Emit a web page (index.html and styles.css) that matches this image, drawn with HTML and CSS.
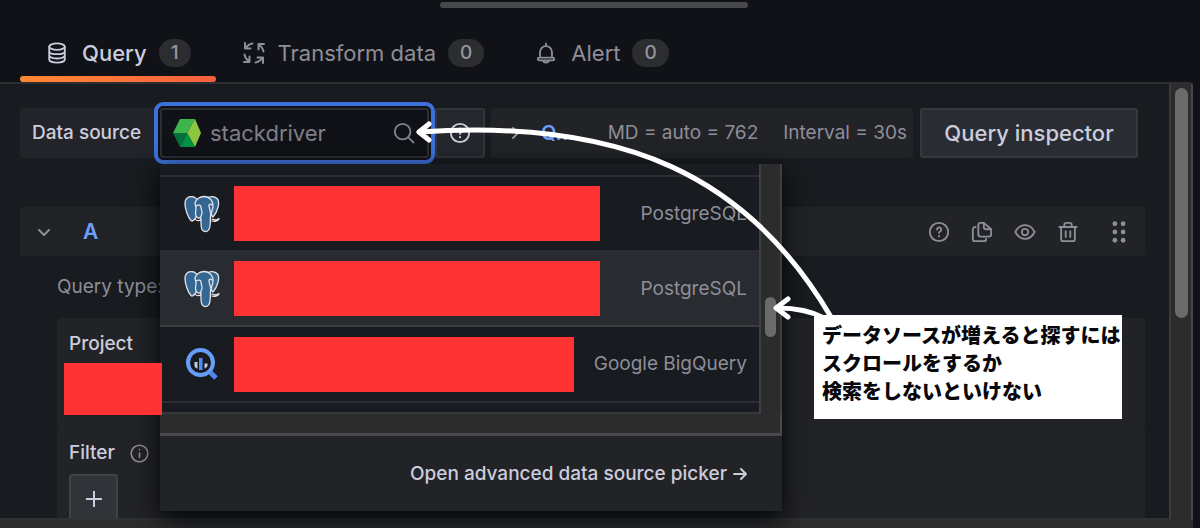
FILE: index.html
```html
<!DOCTYPE html>
<html lang="ja">
<head>
<meta charset="utf-8">
<title>Query editor</title>
<meta name="viewport" content="width=device-width, initial-scale=1">
<link rel="stylesheet" href="styles.css">
</head>
<body>
<svg class="defs" aria-hidden="true">
  <symbol id="elephant" viewBox="0 0 36 38">
    <g stroke="#e4e2ea" stroke-width="1.3" stroke-linejoin="round" stroke-linecap="round" fill="#336791">
      <path d="M10 2C4 .8.8 3.500 1 9c.1 5 3 13.500 6 16.500 1.500 1.500 3-.5 5-3L14 5z"/>
      <path d="M23 3c3-2 8-2 10.500 1 2.500 3.500.5 12-4.500 18l-4-4z"/>
      <path d="M11 8c1-4 5-6.500 9-6.500 6 0 9.500 5 9 10-.3 3-2 6.500-2.500 9.500-.3 3 .2 6-.5 10-.5 3.500-2 5.500-4.500 5.500s-4-2-4.300-5l-.5-9c-3 1.500-4.700-.5-5.200-3.500-.3-2 .7-4 .5-6z"/>
      <path d="M12 11c2-1.500 5-1.200 5 1 0 2.500 2 5 .5 8-.4 1-.8 1.500-.9 2.500" fill="none"/>
      <path d="M28 10c-1-1.300-3.500-1-3 1 .5 3 1 6 2.500 9" fill="none"/>
      <path d="M28 24c2 1.200 5 .8 7-.5-.5 2-4 3.500-7 2.500M11.500 24.500c1 1.500 4 1.500 5.500 0" fill="none"/>
    </g>
  </symbol>
  <symbol id="help" viewBox="0 0 24 24">
    <g fill="none" stroke="currentColor" stroke-width="2" stroke-linecap="round"><circle cx="12" cy="12" r="10"/><path d="M9.800 9.300a2.300 2.300 0 1 1 3.400 2.100c-.8.4-1.200.9-1.200 1.600"/></g><circle cx="12" cy="16.500" r="1.200" fill="currentColor"/>
  </symbol>
  <symbol id="turn" viewBox="0 0 24 24">
    <path d="M3 2v5.500h5.500M3.500 7.500C5 5 7 3.200 10.500 2.500" fill="none" stroke="currentColor" stroke-width="2" stroke-linecap="round" stroke-linejoin="round"/>
  </symbol>
</svg>

<div class="editor">
  <div class="handle"></div>
  <nav class="tabs">
    <a class="tab active" href="#query">
      <svg class="tab-icon" viewBox="0 0 24 24"><g class="line"><ellipse cx="12" cy="5" rx="8.500" ry="3.500"/><path d="M3.500 5v14c0 2 3.800 3.500 8.500 3.500s8.500-1.500 8.500-3.500V5M3.500 10c0 2 3.800 3.300 8.500 3.300s8.500-1.300 8.500-3.300M3.500 14.500c0 2 3.800 3.500 8.500 3.500s8.500-1.500 8.500-3.500"/></g></svg>
      <span>Query</span><span class="count">1</span>
    </a>
    <a class="tab transform" href="#transform">
      <svg class="tab-icon" viewBox="0 0 24 24"><use href="#turn"/><use href="#turn" transform="rotate(90 12 12)"/><use href="#turn" transform="rotate(180 12 12)"/><use href="#turn" transform="rotate(270 12 12)"/></svg>
      <span>Transform data</span><span class="count">0</span>
    </a>
    <a class="tab alert" href="#alert">
      <svg class="tab-icon" viewBox="0 0 24 24"><g class="line"><path d="M12 1.500V4M5.500 17v-6a6.500 6.500 0 0 1 13 0v6M4.500 17h15a1.500 1.500 0 0 1 0 3h-15a1.500 1.500 0 0 1 0-3M8.500 20c.5 1.700 2 2.500 3.500 2.500s3-.8 3.500-2.500"/></g></svg>
      <span>Alert</span><span class="count">0</span>
    </a>
  </nav>

  <div class="frame">
    <main class="content">
      <div class="source-row">
        <label class="source-label" for="source">Data source</label>
        <div class="picker">
          <div class="picker-box">
            <svg class="hex" viewBox="0 0 28 28"><path d="M7 0h15l-8 14H0z" fill="#3cb54a"/><path d="M22 0l6 14-6 14-8-14z" fill="#8cc540"/><path d="M0 14h14L7 28z" fill="#04703a"/><path d="M14 14l8 14H7z" fill="#009245"/></svg>
            <input id="source" type="text" placeholder="stackdriver">
            <svg class="search" viewBox="0 0 24 24"><g class="line"><circle cx="10.500" cy="10.500" r="8.500"/><path d="M17 17l5.500 5.500"/></g></svg>
          </div>
          <div class="menu">
            <div class="menu-body">
              <ul class="list">
                <li class="item"><svg class="logo"><use href="#elephant"/></svg><span class="mask wide"></span><span class="kind">PostgreSQL</span></li>
                <li class="item hover"><svg class="logo"><use href="#elephant"/></svg><span class="mask wide"></span><span class="kind">PostgreSQL</span></li>
                <li class="item"><svg class="logo" viewBox="0 0 36 38"><circle cx="16.500" cy="17.500" r="12.500" fill="none" stroke="#669df6" stroke-width="4"/><path d="M10.500 17v4.500c1 1.200 2 1.900 3 2.300V17zM20.500 18.500v5c1.500-.7 2.500-1.600 3-2.500v-2.500z" fill="#c9cbe0"/><path d="M15 13h3.500v12H15z" fill="#4f8df5"/><path d="M26.500 27.500l5.500 5.500" stroke="#4f86ef" stroke-width="5"/></svg><span class="mask"></span><span class="kind">Google BigQuery</span></li>
              </ul>
              <div class="menu-track"><div class="menu-thumb"></div></div>
            </div>
            <div class="menu-bottom"></div>
            <div class="menu-footer"><button class="advanced" type="button">Open advanced data source picker <svg viewBox="0 0 14 14"><g class="line"><path d="M1 7h11.500M8 2l5 5-5 5"/></g></svg></button></div>
          </div>
        </div>
        <button class="help-button" type="button" aria-label="Help"><svg><use href="#help"/></svg></button>
        <div class="options">
          <svg class="chevron" viewBox="0 0 16 16"><g class="line"><path d="M6 3l5 5-5 5"/></g></svg>
          <span class="options-title">Q...</span><span class="md">MD = auto = 762</span><span>Interval = 30s</span>
        </div>
        <button class="inspector" type="button">Query inspector</button>
      </div>

      <section class="query">
        <header class="query-head">
          <svg class="chevron" viewBox="0 0 16 16"><g class="line"><path d="M3 6l5 5 5-5"/></g></svg>
          <span class="ref">A</span>
          <div class="actions">
            <button type="button" aria-label="Help"><svg viewBox="0 0 24 24"><use href="#help"/></svg></button>
            <button type="button" aria-label="Duplicate"><svg viewBox="0 0 24 24"><g class="line"><path d="M14 2h-3.500A2.500 2.500 0 0 0 8 4.500v10A2.500 2.500 0 0 0 10.500 17h9a2.500 2.500 0 0 0 2.500-2.500V9zM14 2v4.500A2.500 2.500 0 0 0 16.500 9H22M5 6.500c-1.800 0-3 1-3 2.500v10.500A2.500 2.500 0 0 0 4.500 22H14c1.500 0 2.500-1 2.500-2.500"/></g></svg></button>
            <button type="button" aria-label="Hide"><svg viewBox="0 0 24 24"><g class="line"><path d="M1.500 12C4 7 7.500 4.500 12 4.500S20 7 22.500 12C20 17 16.500 19.500 12 19.500S4 17 1.500 12z"/><circle cx="12" cy="12" r="3.500"/></g></svg></button>
            <button type="button" aria-label="Remove"><svg viewBox="0 0 24 24"><g class="line"><path d="M2.500 6.500h19M8 6.500V4a2 2 0 0 1 2-2h4a2 2 0 0 1 2 2v2.500M4.500 6.500v13A2.500 2.500 0 0 0 7 22h10a2.500 2.500 0 0 0 2.500-2.500v-13M9.500 11v6.500M14.500 11v6.500"/></g></svg></button>
            <button class="drag" type="button" aria-label="Move"><svg viewBox="0 0 24 24" fill="currentColor"><circle cx="7.500" cy="3" r="2.600"/><circle cx="16.500" cy="3" r="2.600"/><circle cx="7.500" cy="12" r="2.600"/><circle cx="16.500" cy="12" r="2.600"/><circle cx="7.500" cy="21" r="2.600"/><circle cx="16.500" cy="21" r="2.600"/></svg></button>
          </div>
        </header>
        <div class="query-type">Query type:</div>
        <div class="field project"><div class="field-label">Project</div><div class="mask"></div></div>
        <div class="field filter">
          <div class="field-label">Filter <svg viewBox="0 0 24 24"><g class="line"><circle cx="12" cy="12" r="10.500"/><path d="M12 11.500V17M12 7v.2"/></g></svg></div>
          <button class="add" type="button" aria-label="Add filter"><svg viewBox="0 0 16 16"><g class="line"><path d="M8 0v16M0 8h16"/></g></svg></button>
        </div>
      </section>
    </main>
    <div class="track"><div class="thumb"></div></div>
  </div>
  <div class="bottom-track"></div>

  <svg class="arrows" viewBox="0 0 420 200" aria-hidden="true">
    <g fill="none" stroke="#fff" stroke-width="5" stroke-linecap="round" stroke-linejoin="round">
      <path d="M5 12C210-2 334 56 417 197"/><path d="M15 4L5 12l10 8"/>
      <path d="M364 188c16 0 33 3 46 10"/><path d="M374 179l-12 9 12 9"/>
    </g>
  </svg>
  <aside class="note">データソースが増えると探すには<br>スクロールをするか<br>検索をしないといけない</aside>
</div>
</body>
</html>
```
FILE: styles.css
```css
* { box-sizing: border-box; }

body {
  margin: 0;
  background: #111217;
  color: #ccccdc;
  font: 500 19px/24px Inter, "Noto Sans", sans-serif;
}

button, input { font: inherit; color: inherit; }
button { padding: 0; border: 0; background: none; }
svg { display: block; flex: none; }

.defs { position: absolute; width: 0; height: 0; }

.line {
  fill: none;
  stroke: currentColor;
  stroke-width: 2;
  stroke-linecap: round;
  stroke-linejoin: round;
}

.editor {
  position: relative;
  display: flex;
  flex-direction: column;
  height: 100vh;
  overflow: hidden;
}

.handle {
  width: 308px;
  height: 6px;
  margin: 2px 12px 0 0;
  align-self: center;
  border-radius: 3px;
  background: #47484c;
}

.tabs {
  display: flex;
  flex: none;
  height: 74px;
  padding: 16px 20px 0;
}

.tab {
  position: relative;
  display: flex;
  align-items: center;
  height: 58px;
  padding: 0 25px 0 26px;
  color: #8e8e99;
  font-size: 22px;
  font-weight: 400;
  text-decoration: none;
}

.tab.active { color: #ccccdc; font-weight: 500; }
.tab.active::after {
  content: "";
  position: absolute;
  inset: auto 0 0;
  height: 6px;
  border-radius: 3px;
  background: linear-gradient(90deg, #ff8833, #f55f3e);
}

.tab-icon { width: 22px; height: 22px; margin-right: 14px; }
.transform .tab-icon { width: 24px; height: 24px; margin-right: 12px; }

.count {
  min-width: 32px;
  margin-left: 12px;
  padding: 2px 12px;
  border-radius: 15px;
  background: #2c2d31;
  color: #95959f;
  font-size: 19px;
  font-weight: 500;
  text-align: center;
}

.frame {
  display: flex;
  flex: 1;
  min-height: 0;
  margin-right: 7px;
  border-top: 2px solid #2d2e32;
  border-right: 2px solid #46474a;
  border-radius: 0 4px 0 0;
}

.content {
  display: flex;
  flex: 1;
  flex-direction: column;
  min-width: 0;
  padding: 24px 24px 0 20px;
  border-right: 2px solid #3b3c3f;
  border-bottom: 2px solid #303135;
  background: #181b1f;
}

.track { width: 20px; padding: 4px 3px 0 4px; background: #2c2c2c; }
.thumb { height: 230px; border-radius: 7px; background: #6b6b6b; }
.bottom-track { flex: none; height: 8px; margin-right: 7px; background: #2c2c2c; }

.source-row {
  display: flex;
  flex: none;
  height: 50px;
  margin-right: 7px;
}

.source-label {
  width: 138px;
  padding: 13px 0 13px 12px;
  border-radius: 3px;
  background: #222429;
  white-space: nowrap;
}

.picker { position: relative; width: 277px; }

.picker-box {
  display: flex;
  align-items: center;
  height: 50px;
  margin: 0 6px 0 2px;
  padding: 0 12px 0 11px;
  border: 2px solid #2c2d33;
  border-radius: 3px;
  background: #111217;
  outline: 4px solid #3d71d9;
  outline-offset: 2px;
  box-shadow: 0 0 0 2px #111217;
}

.picker-box input {
  flex: 1;
  min-width: 0;
  padding: 0 0 0 9px;
  border: 0;
  outline: 0;
  background: none;
  font-size: 22px;
  font-weight: 400;
}
.picker-box input::placeholder { color: #7f7f89; opacity: 1; }
.hex { width: 28px; height: 28px; }
.search { width: 22px; height: 22px; color: #83838d; }

.help-button {
  display: grid;
  place-items: center;
  width: 50px;
  border: 2px solid #34353a;
  border-radius: 3px;
  background: #24272d;
}
.help-button svg { width: 22px; height: 22px; }

.options {
  display: flex;
  flex: 1;
  align-items: center;
  margin: 0 7px 0 6px;
  padding: 0 6px 0 16px;
  border-radius: 3px;
  background: #222327;
  color: #8e8e99;
  white-space: nowrap;
  font-weight: 400;
}
.chevron { width: 16px; height: 16px; color: #8e8e99; }
.options-title { margin-left: 18px; color: #6e9fff; font-size: 20px; font-weight: 600; }
.md { margin: 0 25px 0 auto; }

.inspector {
  width: 218px;
  border: 2px solid #37383c;
  border-radius: 3px;
  background: #292c33;
  font-size: 22px;
}

.query { display: flex; flex: 1; flex-direction: column; min-height: 0; margin-top: 49px; }

.query-head {
  display: flex;
  flex: none;
  align-items: center;
  height: 49px;
  padding: 0 15px 0 16px;
  border-radius: 3px;
  background: #222327;
}
.ref { margin-left: 31px; color: #6e9fff; font-size: 21px; font-weight: 600; }
.actions { display: flex; gap: 21px; margin-left: auto; color: #8e8e99; }
.actions svg { width: 22px; height: 22px; }
.actions .drag { margin-left: 8px; }

.query-type { margin: 19px 0 0 37px; color: #8e8e99; font-weight: 400; }

.field { margin-left: 37px; padding: 14px 12px 0; border-radius: 3px; background: #222327; }
.project { flex: none; height: 108px; margin-top: 19px; }
.filter { flex: 1; min-height: 0; overflow: hidden; padding-top: 15px; }
.field-label { display: flex; align-items: center; gap: 15px; }
.field-label svg { width: 19px; height: 19px; color: #8e8e99; }

.mask { background: #ff3333; }
.project .mask {
  position: relative;
  z-index: 3;
  width: 98px;
  height: 52px;
  margin: 7px -5px 0;
}

.add {
  display: grid;
  place-items: center;
  width: 49px;
  height: 49px;
  margin-top: 9px;
  border: 2px solid #414247;
  border-radius: 3px;
  background: #323338;
}
.add svg { width: 16px; height: 16px; }

.menu {
  position: absolute;
  z-index: 2;
  top: 56px;
  left: 2px;
  width: 622px;
  background: #222327;
  box-shadow: 0 8px 24px #010409;
}
.menu-body { display: flex; height: 250px; }
.list {
  flex: 1;
  margin: 0;
  padding: 11px 0 0;
  border-bottom: 2px solid #37383b;
  background: #181b1f;
  list-style: none;
}
.item {
  display: flex;
  align-items: center;
  height: 75px;
  padding: 0 12px 0 24px;
  border-top: 2px solid #2b2d32;
}
.item:last-child { height: 78px; border-bottom: 2px solid #2b2d32; }
.item.hover { background: #282b30; }
.hover + .item { border-top-color: #3c3e42; }
.logo { width: 36px; height: 38px; }
.item .mask { width: 340px; height: 55px; margin-left: 14px; }
.item .wide { width: 366px; }
.kind { margin-left: auto; color: #8e8e99; font-weight: 400; }

.menu-track {
  width: 23px;
  padding: 133px 4px 0;
  border: solid #3f3f41;
  border-width: 0 2px;
  background: #2c2c2c;
}
.menu-thumb { height: 40px; border-radius: 7px; background: #6b6b6b; }
.menu-bottom { height: 22px; border: solid #48494c; border-width: 0 2px 3px 0; background: #2c2c2c; }
.menu-footer { display: flex; justify-content: flex-end; padding: 26px 35px 25px; }
.advanced { display: flex; align-items: center; gap: 6px; }
.advanced svg { width: 14px; height: 14px; }

.arrows { position: absolute; z-index: 4; top: 120px; left: 414px; width: 420px; height: 200px; }

.note {
  position: absolute;
  z-index: 5;
  top: 315px;
  left: 814px;
  width: 308px;
  padding: 6px 0 14px 8px;
  background: #fff;
  color: #08080c;
  font: 900 20px/28px "Noto Sans CJK JP", sans-serif;
  white-space: nowrap;
}
```
